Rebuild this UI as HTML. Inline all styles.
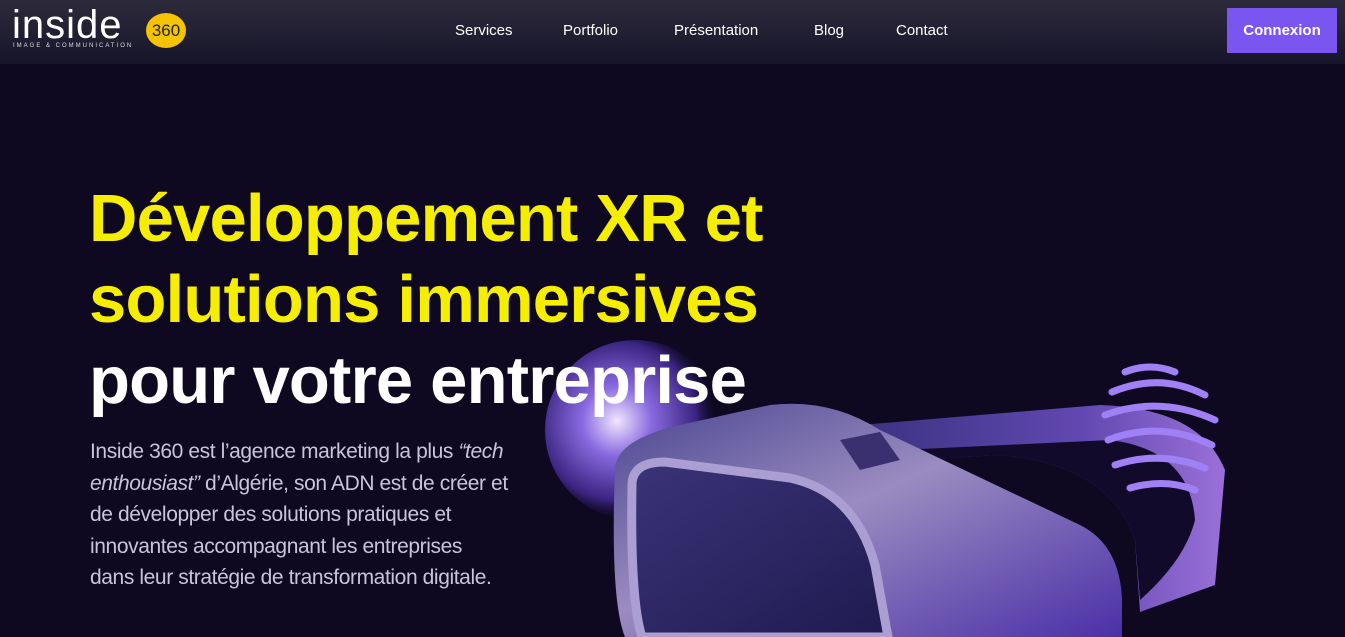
<!DOCTYPE html>
<html><head><meta charset="utf-8"><style>
*{margin:0;padding:0;box-sizing:border-box}
body{width:1345px;height:637px;overflow:hidden;background:#0e0820;font-family:"Liberation Sans",sans-serif;position:relative}
header{position:absolute;left:0;top:0;width:1345px;height:64px;background:linear-gradient(180deg,#2c2a3a,#17152a);z-index:2}
nav a{position:absolute;top:22px;color:#fff;font-size:15px;text-decoration:none}
.btn{position:absolute;left:1227px;top:8px;width:110px;height:45px;background:#7b55f0;color:#fff;font-weight:bold;font-size:15px;display:flex;align-items:center;justify-content:center}
h1{position:absolute;left:89px;top:178px;font-size:67px;line-height:81px;font-weight:bold;letter-spacing:-0.8px;color:#fff;z-index:1;white-space:nowrap}
h1 .y{color:#f5ee00}
p{position:absolute;left:90px;top:436px;width:460px;font-size:21px;line-height:31.5px;color:#c9c5d9;letter-spacing:-0.4px;z-index:1}
svg.vr{position:absolute;left:0;top:0}
</style></head><body>
<svg class="vr" width="1345" height="637" viewBox="0 0 1345 637">
<defs>
<radialGradient id="b" cx="0.4" cy="0.45" r="0.55"><stop offset="0" stop-color="#f0e6ff"/><stop offset="0.35" stop-color="#8a6ae0"/><stop offset="0.8" stop-color="#3a2480"/><stop offset="1" stop-color="#1a1040" stop-opacity="0"/></radialGradient>
<linearGradient id="h" x1="0" y1="0" x2="1" y2="1"><stop offset="0" stop-color="#4a4590"/><stop offset="0.45" stop-color="#9a8cc0"/><stop offset="1" stop-color="#4a30a8"/></linearGradient>
<linearGradient id="s" x1="0" y1="0" x2="1" y2="0"><stop offset="0" stop-color="#3a3280"/><stop offset="0.6" stop-color="#6048b0"/><stop offset="1" stop-color="#9a70d8"/></linearGradient>
<linearGradient id="f" x1="0" y1="0" x2="1" y2="1"><stop offset="0" stop-color="#3a3478"/><stop offset="1" stop-color="#201a50"/></linearGradient>
</defs>
<circle cx="635" cy="430" r="90" fill="url(#b)"/>
<path d="M860,425 L1100,405 Q1200,408 1225,470 L1215,585 L1140,612 L1135,540 Q1110,465 1000,455 L880,462Z" fill="url(#s)"/>
<path d="M880,462 L1000,455 Q1110,465 1135,540 L1140,600 Q1185,560 1195,520 Q1190,450 1110,440 L900,450Z" fill="#120a2a"/>
<g fill="none" stroke="#a080f5" stroke-width="7" stroke-linecap="round">
<path d="M1125,372 Q1150,362 1175,372"/><path d="M1112,392 Q1160,372 1205,395"/><path d="M1105,415 Q1160,395 1215,420"/><path d="M1108,440 Q1160,420 1212,445"/><path d="M1115,465 Q1160,450 1205,468"/><path d="M1130,488 Q1165,478 1195,490"/>
</g>
<path d="M615,470 Q615,440 680,425 L770,405 Q830,398 880,430 L1080,525 Q1120,545 1122,600 L1122,637 L625,637 Q610,600 615,470Z" fill="url(#h)"/>
<path d="M632,485 Q632,462 665,462 L790,478 Q855,492 875,565 L888,637 L642,637 Q630,600 632,485Z" fill="url(#f)" stroke="#aa9ed2" stroke-width="9"/>
<path d="M840,440 L880,432 L900,460 L860,470Z" fill="#3a3070"/>
</svg>
<header>
<div style="position:absolute;left:12px;top:4px;color:#fff;font-size:40px;letter-spacing:1px;line-height:42px">inside</div>
<div style="position:absolute;left:146px;top:13px;width:40px;height:35px;border-radius:50%;background:#f5c400;color:#222;font-size:17px;line-height:35px;text-align:center">360</div>
<div style="position:absolute;left:13px;top:43px;color:#ddd;font-size:6px;letter-spacing:2px">IMAGE &amp; COMMUNICATION</div>
<nav><a style="left:455px">Services</a><a style="left:563px">Portfolio</a><a style="left:674px">Présentation</a><a style="left:814px">Blog</a><a style="left:896px">Contact</a></nav>
<div class="btn">Connexion</div>
</header>
<h1><span class="y">Développement XR et<br>solutions immersives</span><br>pour votre entreprise</h1>
<p>Inside 360 est l’agence marketing la plus <i>“tech<br>enthousiast”</i> d’Algérie, son ADN est de créer et<br>de développer des solutions pratiques et<br>innovantes accompagnant les entreprises<br>dans leur stratégie de transformation digitale.</p>
</body></html>
